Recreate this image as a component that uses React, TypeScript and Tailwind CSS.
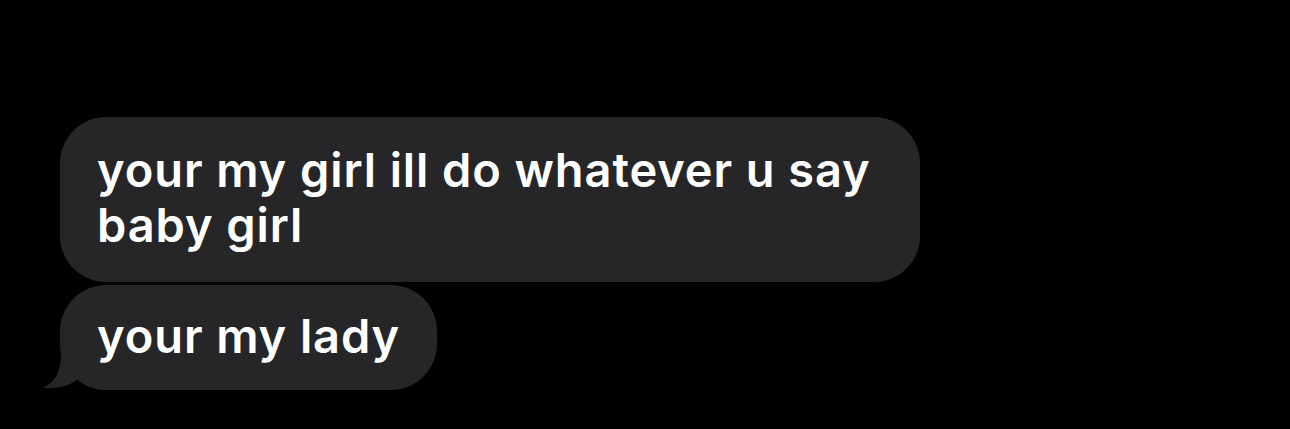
const Bubble = ({ children, tail = false, className = '' }: { children: React.ReactNode; tail?: boolean; className?: string }) => (
  <div className={`relative rounded-[46px] bg-[#262629] px-[37px] text-[47px] font-semibold leading-[55px] tracking-[0.9px] text-white ${className}`}>
    {tail && (
      <svg
        className="absolute bottom-0 left-[-18px]"
        width="60"
        height="40"
        viewBox="0 0 60 40"
      >
        <path d="M20 0 C18 20 16 30 1 38 C14 39 28 36 36 29 L36 0 Z" fill="#262629" />
      </svg>
    )}
    <p className="relative">{children}</p>
  </div>
);

export default function App() {
  return (
    <div
      className="min-h-[429px] w-[1290px] bg-black pl-[60px] pt-[117px]"
      style={{ fontFamily: 'Inter, "Liberation Sans", sans-serif' }}
    >
      <div className="flex flex-col items-start gap-[3px]">
        <Bubble className="w-[860px] pb-[30px] pt-[25px]">
          your my girl ill do whatever u say baby girl
        </Bubble>
        <Bubble tail className="pb-[27px] pt-[23px]">
          your my lady
        </Bubble>
      </div>
    </div>
  );
}
